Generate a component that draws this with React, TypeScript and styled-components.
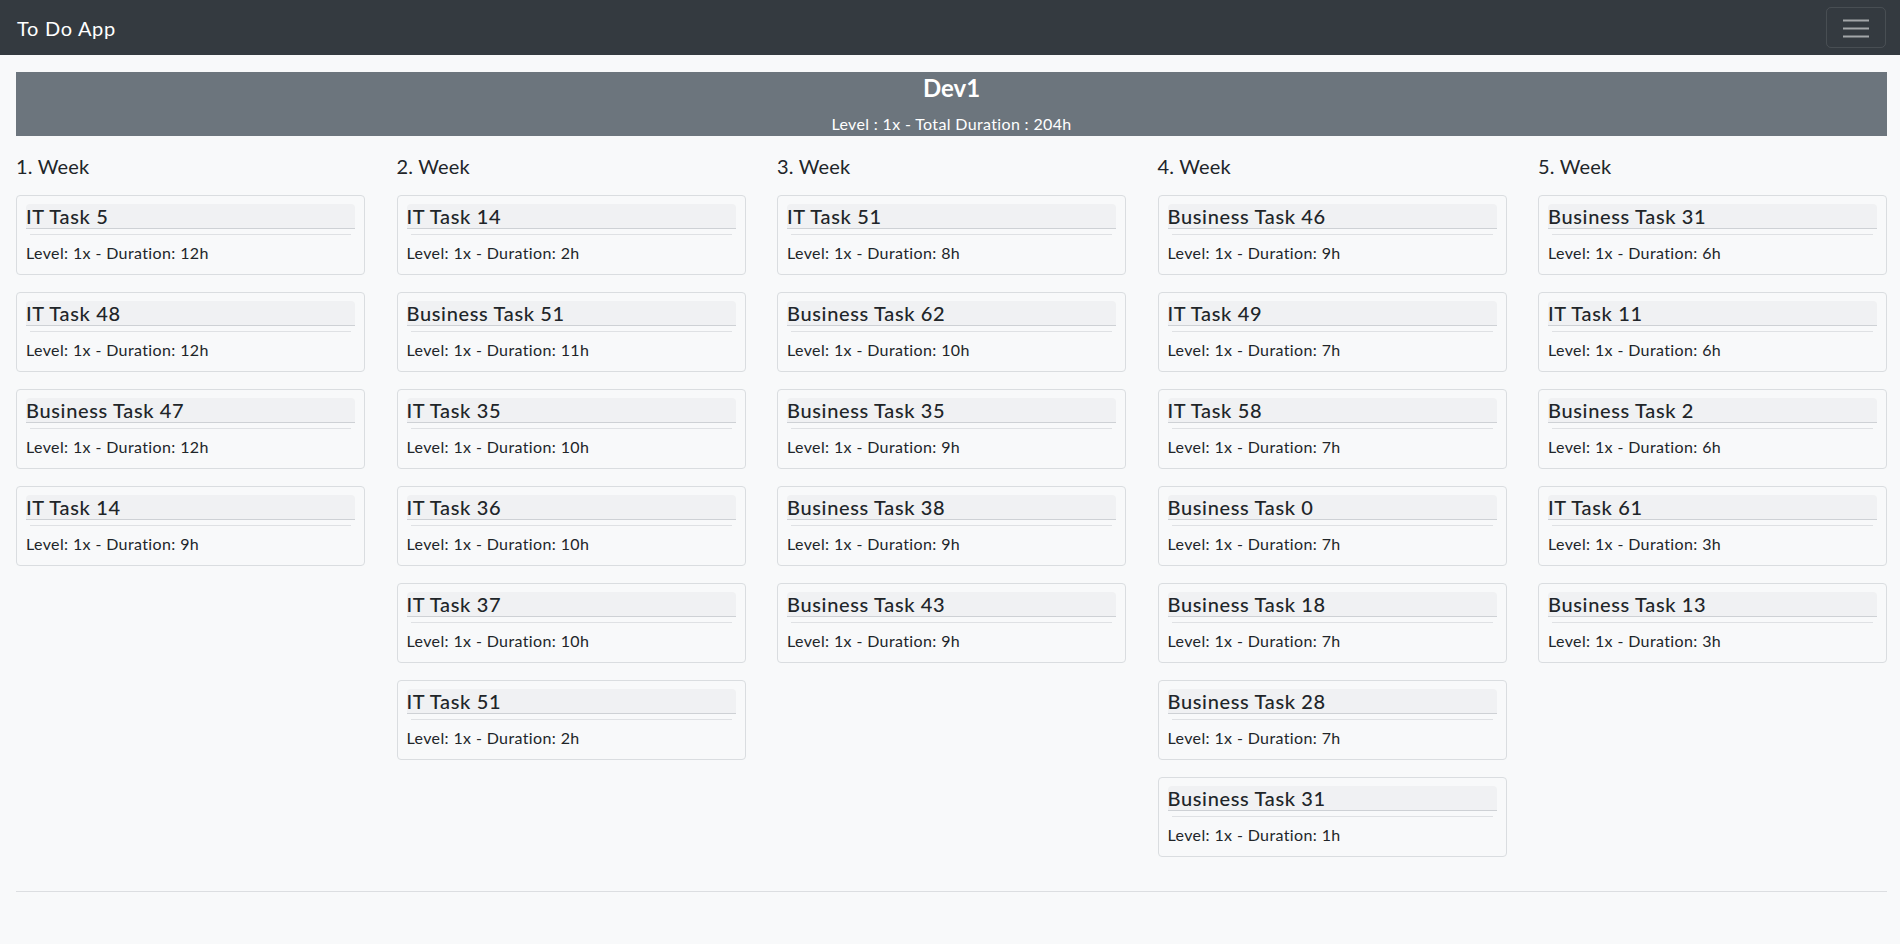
import React from "react";
import styled, { createGlobalStyle } from "styled-components";

const GlobalStyle = createGlobalStyle`
  * { box-sizing: border-box; }
  html, body { margin: 0; padding: 0; }
  body {
    background: #f8f9fa;
    color: #212529;
    font-family: Lato, "Liberation Sans", sans-serif;
    font-size: 16px;
    line-height: 1.5;
  }
`;

const Navbar = styled.nav`
  height: 55px;
  background: #343a40;
  display: flex;
  align-items: center;
  justify-content: space-between;
  padding: 0 14px 0 17px;
`;

const Brand = styled.span`
  color: #fff;
  font-size: 20px;
  line-height: 1.2;
  letter-spacing: 0.7px;
`;

const Toggler = styled.button`
  width: 60px;
  height: 41px;
  border: 1px solid rgba(255, 255, 255, 0.1);
  border-radius: 5px;
  background: transparent;
  display: flex;
  align-items: center;
  justify-content: center;
  padding: 0;
`;

const Main = styled.main`
  padding: 17px 13px 0 16px;
`;

const Banner = styled.header`
  background: #6c757d;
  color: #fff;
  text-align: center;
  height: 64px;
  padding-top: 2px;
`;

const DevName = styled.h4`
  margin: 0 0 9px;
  font-size: 24px;
  font-weight: 700;
  line-height: 1.2;
`;

const DevInfo = styled.p`
  margin: 0;
  font-size: 16px;
  line-height: 24px;
  letter-spacing: 0.35px;
`;

const Weeks = styled.div`
  display: grid;
  grid-template-columns: repeat(5, 1fr);
  column-gap: 31.5px;
  margin-top: 18px;
`;

const WeekColumn = styled.section`
  display: flex;
  flex-direction: column;
`;

const WeekTitle = styled.h5`
  margin: 0 0 17px;
  font-size: 20px;
  font-weight: 400;
  line-height: 1.2;
  letter-spacing: 0.2px;
  color: #212529;
`;

const Card = styled.div`
  border: 1px solid #dadde0;
  border-radius: 4px;
  padding: 8px 9px 8px;
  margin-bottom: 17px;
  height: 80px;
`;

const TaskTitle = styled.h5`
  margin: 0;
  font-size: 20px;
  font-weight: 500;
  line-height: 24px;
  letter-spacing: 0.65px;
  background: #f0f1f3;
  border-bottom: 1px solid #ced1d5;
  border-radius: 4px 4px 0 0;
`;

const Divider = styled.hr`
  border: 0;
  border-top: 1px solid #dfe1e4;
  margin: 5px 4px 6px;
`;

const TaskInfo = styled.p`
  margin: 0;
  font-size: 16px;
  line-height: 24px;
  letter-spacing: 0.38px;
`;

const FooterRule = styled.hr`
  border: 0;
  border-top: 1px solid #dcdee1;
  margin: 17px 0 16px;
`;

type Task = { name: string; hours: number };

const weeks: Task[][] = [
  [
    { name: "IT Task 5", hours: 12 },
    { name: "IT Task 48", hours: 12 },
    { name: "Business Task 47", hours: 12 },
    { name: "IT Task 14", hours: 9 },
  ],
  [
    { name: "IT Task 14", hours: 2 },
    { name: "Business Task 51", hours: 11 },
    { name: "IT Task 35", hours: 10 },
    { name: "IT Task 36", hours: 10 },
    { name: "IT Task 37", hours: 10 },
    { name: "IT Task 51", hours: 2 },
  ],
  [
    { name: "IT Task 51", hours: 8 },
    { name: "Business Task 62", hours: 10 },
    { name: "Business Task 35", hours: 9 },
    { name: "Business Task 38", hours: 9 },
    { name: "Business Task 43", hours: 9 },
  ],
  [
    { name: "Business Task 46", hours: 9 },
    { name: "IT Task 49", hours: 7 },
    { name: "IT Task 58", hours: 7 },
    { name: "Business Task 0", hours: 7 },
    { name: "Business Task 18", hours: 7 },
    { name: "Business Task 28", hours: 7 },
    { name: "Business Task 31", hours: 1 },
  ],
  [
    { name: "Business Task 31", hours: 6 },
    { name: "IT Task 11", hours: 6 },
    { name: "Business Task 2", hours: 6 },
    { name: "IT Task 61", hours: 3 },
    { name: "Business Task 13", hours: 3 },
  ],
];

const MenuIcon = () => (
  <svg width="30" height="30" viewBox="0 0 30 30" aria-hidden="true">
    <path
      d="M2 7.5h26M2 15.5h26M2 23.5h26"
      stroke="rgba(255,255,255,0.55)"
      strokeWidth="2"
      strokeLinecap="butt"
    />
  </svg>
);

export default function App() {
  return (
    <>
      <GlobalStyle />
      <Navbar>
        <Brand>To Do App</Brand>
        <Toggler aria-label="Toggle navigation">
          <MenuIcon />
        </Toggler>
      </Navbar>
      <Main>
        <Banner>
          <DevName>Dev1</DevName>
          <DevInfo>Level : 1x - Total Duration : 204h</DevInfo>
        </Banner>
        <Weeks>
          {weeks.map((tasks, i) => (
            <WeekColumn key={i}>
              <WeekTitle>{i + 1}. Week</WeekTitle>
              {tasks.map((t, j) => (
                <Card key={j}>
                  <TaskTitle>{t.name}</TaskTitle>
                  <Divider />
                  <TaskInfo>Level: 1x - Duration: {t.hours}h</TaskInfo>
                </Card>
              ))}
            </WeekColumn>
          ))}
        </Weeks>
        <FooterRule />
      </Main>
    </>
  );
}
